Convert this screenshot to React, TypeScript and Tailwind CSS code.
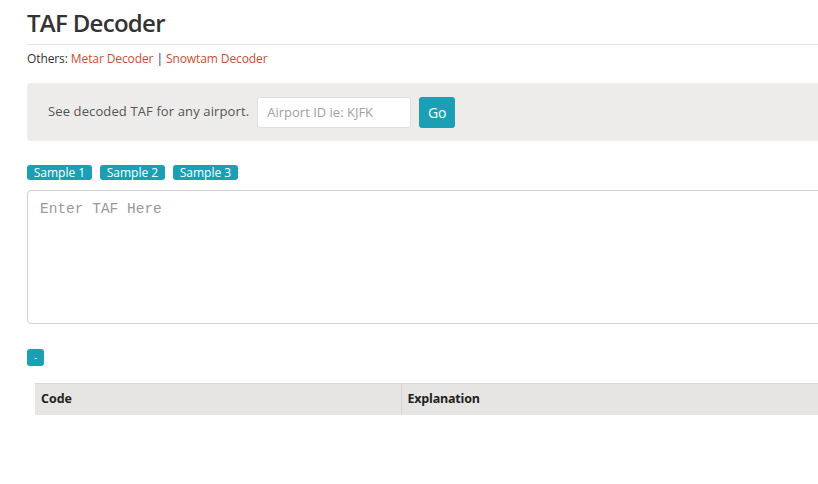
import { useState } from 'react';

const font = "font-['Open_Sans','Noto_Sans',sans-serif]";

const App = () => {
    const [taf, setTaf] = useState('');
    const [airport, setAirport] = useState('');

    return (
        <div className={`w-[818px] h-[484px] overflow-hidden bg-white text-[#333] ${font}`}>
            <div className="w-[1100px] pl-[27px]">
                <h1 className="pt-[7px] text-[24px] leading-[32px] font-semibold text-[#333] tracking-[-0.7px]">TAF Decoder</h1>
                <div className="mt-[5px] border-t border-[#e3e3e3]" />
                <p className="mt-[5px] text-[12px] leading-[18px] text-[#333] tracking-[-0.1px]">
                    Others: <a href="#" className="text-[#cc4c36]">Metar Decoder</a>{' '}
                    <span className="text-[#3b2a55]">|</span>{' '}
                    <a href="#" className="text-[#cc4c36]">Snowtam Decoder</a>
                </p>

                <div className="mt-[15px] h-[58px] rounded-[4px] bg-[#edeceb] flex items-center pl-[21px]">
                    <span className="text-[13px] text-[#555] tracking-[0.12px]">See decoded TAF for any airport.</span>
                    <input
                        value={airport}
                        onChange={e => setAirport(e.target.value)}
                        placeholder="Airport ID ie: KJFK"
                        className="ml-[8px] w-[154px] h-[31px] px-[9px] rounded-[3px] border border-[#dedede] bg-white text-[13px] placeholder:text-[#a0a0a0] outline-none"
                    />
                    <button className="ml-[8px] w-[36px] h-[31px] rounded-[3px] bg-[#1a9fb4] text-white text-[14px]">Go</button>
                </div>

                <div className="mt-[24px] flex gap-[8px]">
                    {['Sample 1', 'Sample 2', 'Sample 3'].map(s => (
                        <button key={s} className="h-[15px] w-[65px] rounded-[3px] bg-[#1a9fb4] text-white text-[12px] leading-[15px]">
                            {s}
                        </button>
                    ))}
                </div>

                <textarea
                    value={taf}
                    onChange={e => setTaf(e.target.value)}
                    placeholder="Enter TAF Here"
                    className="mt-[10px] block w-full h-[134px] rounded-[4px] border border-[#cfcfcf] px-[12px] py-[8px] font-['Liberation_Mono','DejaVu_Sans_Mono',monospace] text-[14.5px] placeholder:text-[#999] outline-none resize-none"
                />

                <button className="mt-[25px] block w-[17px] h-[17px] rounded-[3px] bg-[#1a9fb4] text-white text-[10px] leading-[17px]">-</button>

                <table className="mt-[17px] ml-[8px] w-[1000px] border-collapse">
                    <thead>
                        <tr className="bg-[#e7e5e3] border-t border-[#d9d9d9] h-[31px]">
                            <th className="w-[366px] text-left pl-[6px] text-[12.5px] font-bold text-[#222] border-r border-[#d8d6d4]">Code</th>
                            <th className="text-left pl-[6px] text-[12.5px] font-bold text-[#222] tracking-[-0.2px]">Explanation</th>
                        </tr>
                    </thead>
                    <tbody />
                </table>
            </div>
        </div>
    );
};

export default App;
